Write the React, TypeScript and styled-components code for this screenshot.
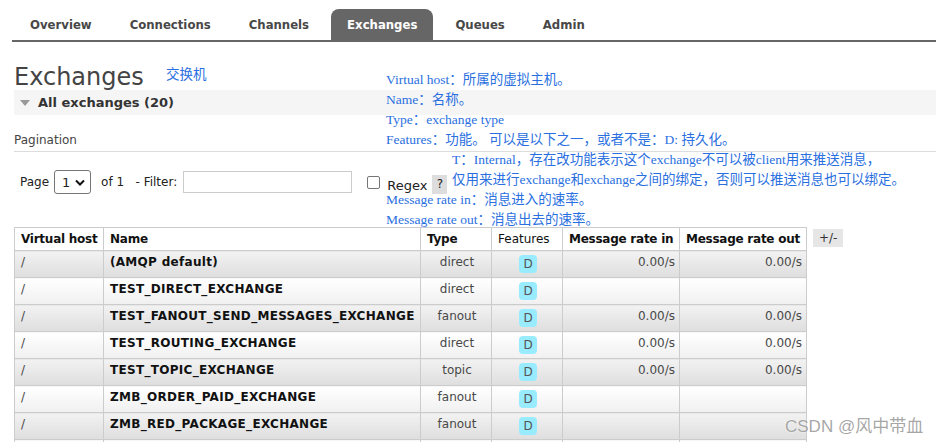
import styled, { createGlobalStyle } from "styled-components";

const GlobalStyle = createGlobalStyle`
  html, body {
    margin: 0;
    padding: 0;
    background: #fff;
    overflow: hidden;
  }
  body {
    font-family: "DejaVu Sans", Verdana, sans-serif;
    font-size: 12px;
    color: #484848;
  }
`;

const Page = styled.div`
  position: relative;
  width: 936px;
  height: 442px;
  overflow: hidden;
`;

const Nav = styled.ul`
  display: flex;
  list-style: none;
  margin: 0 0 0 12px;
  padding: 9px 0 0 2px;
  border-bottom: 2px solid #666;
`;

const Tab = styled.li<{ $active?: boolean }>`
  height: 31px;
  display: flex;
  align-items: center;
  padding: 0 16px;
  margin-right: 6px;
  font-family: "DejaVu Sans Condensed", "DejaVu Sans", sans-serif;
  font-weight: bold;
  font-size: 13px;
  color: ${(p) => (p.$active ? "#fff" : "#484848")};
  background: ${(p) => (p.$active ? "#666" : "transparent")};
  border-radius: 8px 8px 0 0;
`;

const Main = styled.div`
  padding: 0 0 0 14px;
`;

const Title = styled.h1`
  margin: 0;
  padding-top: 20px;
  height: 28px;
  font-size: 24px;
  font-weight: normal;
  color: #444;
  line-height: 30px;
`;

const SectionHead = styled.div`
  display: flex;
  align-items: center;
  gap: 6px;
  height: 25px;
  background: #f5f5f5;
  padding-left: 6px;
  font-weight: bold;
  font-size: 13px;
  color: #333;
`;

const Triangle = styled.span`
  width: 0;
  height: 0;
  border-left: 5px solid transparent;
  border-right: 5px solid transparent;
  border-top: 6px solid #999;
  margin-right: 2px;
`;

const PaginationTitle = styled.div`
  margin-top: 18px;
  padding-bottom: 4px;
  border-bottom: 1px solid #ddd;
  font-size: 12px;
  color: #444;
`;

const FilterRow = styled.div`
  display: flex;
  align-items: center;
  height: 24px;
  margin-top: 18px;
  padding-left: 6px;
  font-size: 12px;
  color: #222;
`;

const Select = styled.div`
  display: flex;
  align-items: center;
  justify-content: space-between;
  box-sizing: border-box;
  width: 37px;
  height: 24px;
  margin: 0 10px 0 5px;
  padding: 0 5px 0 7px;
  border: 1px solid #767676;
  border-radius: 3px;
  font-size: 13px;
`;

const Input = styled.div`
  box-sizing: border-box;
  width: 169px;
  height: 22px;
  margin: 0 15px 0 6px;
  border: 1px solid #ccc;
`;

const Checkbox = styled.div`
  box-sizing: border-box;
  width: 13px;
  height: 13px;
  border: 1px solid #767676;
  border-radius: 2px;
  margin-right: 7px;
`;

const Regex = styled.span`
  padding-top: 6px;
  font-size: 13px;
`;

const Help = styled.span`
  display: inline-flex;
  align-items: center;
  justify-content: center;
  flex-shrink: 0;
  width: 15px;
  height: 19px;
  margin: 4px 0 0 5px;
  background: #ddd;
  font-size: 12px;
  position: relative;
  z-index: 1;
`;

const TableWrap = styled.div`
  display: flex;
  align-items: flex-start;
  gap: 6px;
  margin-top: 33px;
`;

const Table = styled.table`
  border-collapse: collapse;
  font-size: 12px;
  td,
  th {
    border: 1px solid #ccc;
    padding: 0 4px 0 6px;
  }
`;

const Th = styled.th<{ $light?: boolean; $w: number }>`
  height: 23px;
  width: ${(p) => p.$w}px;
  box-sizing: border-box;
  text-align: left;
  font-weight: ${(p) => (p.$light ? "normal" : "bold")};
  letter-spacing: ${(p) => (p.$light ? "0" : "-0.25px")};
  color: #111;
  white-space: nowrap;
`;

const Row = styled.tr<{ $alt: boolean }>`
  td {
    height: 27px;
    box-sizing: border-box;
    vertical-align: top;
    padding-top: 4px;
    background: ${(p) =>
      p.$alt
        ? "linear-gradient(#f2f2f2, #dedede)"
        : "linear-gradient(#ffffff, #f0f0f0)"};
  }
`;

const Cell = styled.td<{ $align?: "left" | "center" | "right"; $bold?: boolean }>`
  text-align: ${(p) => p.$align ?? "left"};
  font-weight: ${(p) => (p.$bold ? "bold" : "normal")};
  letter-spacing: ${(p) => (p.$bold ? "0.3px" : "0")};
  color: ${(p) => (p.$bold ? "#111" : "#484848")};
  white-space: nowrap;
`;

const Badge = styled.span`
  display: inline-flex;
  align-items: center;
  justify-content: center;
  width: 18px;
  height: 18px;
  border-radius: 4px;
  background: #99ebff;
  color: #555;
  font-size: 12px;
`;

const Toggle = styled.div`
  margin-top: 2px;
  padding: 2px 6px;
  background: #e6e6e6;
  color: #333;
  font-size: 12px;
`;

const Note = styled.div<{ $x: number; $y: number }>`
  position: absolute;
  left: ${(p) => p.$x}px;
  top: ${(p) => p.$y}px;
  font-family: "Liberation Serif", "Noto Sans CJK SC", serif;
  font-size: 13.5px;
  line-height: 20px;
  color: #2a6fe0;
  white-space: nowrap;
`;

const Watermark = styled.div`
  position: absolute;
  left: 785px;
  top: 412px;
  font-family: "Liberation Sans", "Noto Sans CJK SC", sans-serif;
  font-size: 17px;
  color: rgba(150, 150, 150, 0.85);
  text-shadow: 0 0 2px #fff;
`;

const rows = [
  { name: "(AMQP default)", type: "direct", rate: true },
  { name: "TEST_DIRECT_EXCHANGE", type: "direct", rate: false },
  { name: "TEST_FANOUT_SEND_MESSAGES_EXCHANGE", type: "fanout", rate: true },
  { name: "TEST_ROUTING_EXCHANGE", type: "direct", rate: true },
  { name: "TEST_TOPIC_EXCHANGE", type: "topic", rate: true },
  { name: "ZMB_ORDER_PAID_EXCHANGE", type: "fanout", rate: false },
  { name: "ZMB_RED_PACKAGE_EXCHANGE", type: "fanout", rate: false },
  { name: "amq.direct", type: "direct", rate: false },
];

const notes: [number, number, string][] = [
  [166, 65, "交换机"],
  [386, 70, "Virtual host：所属的虚拟主机。"],
  [386, 90, "Name：名称。"],
  [386, 110, "Type：exchange type"],
  [386, 130, "Features：功能。 可以是以下之一，或者不是：D: 持久化。"],
  [452, 150, "T：Internal，存在改功能表示这个exchange不可以被client用来推送消息，"],
  [452, 170, "仅用来进行exchange和exchange之间的绑定，否则可以推送消息也可以绑定。"],
  [386, 190, "Message rate in：消息进入的速率。"],
  [386, 210, "Message rate out：消息出去的速率。"],
];

export default function App() {
  return (
    <Page>
      <GlobalStyle />
      <Nav>
        <Tab>Overview</Tab>
        <Tab>Connections</Tab>
        <Tab>Channels</Tab>
        <Tab $active>Exchanges</Tab>
        <Tab>Queues</Tab>
        <Tab>Admin</Tab>
      </Nav>
      <Main>
        <Title>Exchanges</Title>
        <SectionHead>
          <Triangle />
          All exchanges (20)
        </SectionHead>
        <PaginationTitle>Pagination</PaginationTitle>
        <FilterRow>
          Page
          <Select>
            1
            <svg width="10" height="7" viewBox="0 0 10 7">
              <path d="M1 1.5 L5 5.5 L9 1.5" fill="none" stroke="#111" strokeWidth="2" />
            </svg>
          </Select>
          of 1&nbsp;&nbsp;&nbsp;- Filter:
          <Input />
          <Checkbox />
          <Regex>Regex</Regex>
          <Help>?</Help>
        </FilterRow>
        <TableWrap>
          <Table>
            <thead>
              <tr>
                <Th $w={89}>Virtual host</Th>
                <Th $w={317}>Name</Th>
                <Th $w={71}>Type</Th>
                <Th $w={71} $light>
                  Features
                </Th>
                <Th $w={117}>Message rate in</Th>
                <Th $w={127}>Message rate out</Th>
              </tr>
            </thead>
            <tbody>
              {rows.map((r, i) => (
                <Row key={r.name} $alt={i % 2 === 0}>
                  <Cell>/</Cell>
                  <Cell $bold>{r.name}</Cell>
                  <Cell $align="center">{r.type}</Cell>
                  <Cell $align="center">
                    <Badge>D</Badge>
                  </Cell>
                  <Cell $align="right">{r.rate ? "0.00/s" : ""}</Cell>
                  <Cell $align="right">{r.rate ? "0.00/s" : ""}</Cell>
                </Row>
              ))}
            </tbody>
          </Table>
          <Toggle>+/-</Toggle>
        </TableWrap>
      </Main>
      {notes.map(([x, y, t]) => (
        <Note key={t} $x={x} $y={y}>
          {t}
        </Note>
      ))}
      <Watermark>CSDN @风中带血</Watermark>
    </Page>
  );
}
